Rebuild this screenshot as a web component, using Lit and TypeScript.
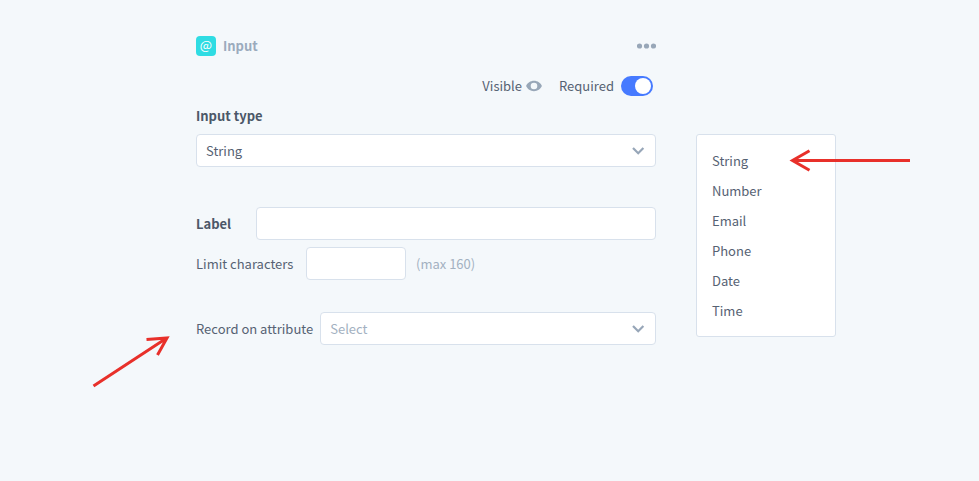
import { LitElement, html, css } from "lit";
import { customElement, property, state } from "lit/decorators.js";

const TYPES = ["String", "Number", "Email", "Phone", "Date", "Time"];

const reset = css`
  *,
  *::before {
    box-sizing: border-box;
  }
  button,
  input,
  select {
    font: inherit;
    color: inherit;
    margin: 0;
  }
  button {
    padding: 0;
    border: 0;
    background: none;
    cursor: pointer;
  }
  svg {
    display: block;
  }
`;

@customElement("type-menu")
class TypeMenu extends LitElement {
  @property({ type: Array }) items: string[] = [];

  static styles = [
    reset,
    css`
      :host {
        display: block;
        position: relative;
      }
      .list {
        margin: 0;
        padding: 11px 15px 10px;
        list-style: none;
        background: #fff;
        border: 1px solid #d8e1ec;
        border-radius: 3px;
      }
      .item {
        display: block;
        width: 100%;
        height: 30px;
        line-height: 30px;
        text-align: left;
      }
      .arrow {
        position: absolute;
        left: 93px;
        top: 14px;
        pointer-events: none;
      }
    `,
  ];

  render() {
    return html`
      <ul class="list">
        ${this.items.map(
          (name) => html`<li>
            <button
              class="item"
              @click=${() => this.dispatchEvent(new CustomEvent("pick", { detail: name }))}
            >${name}</button>
          </li>`
        )}
      </ul>
      <svg class="arrow" width="122" height="24" viewBox="0 0 122 24" fill="none" stroke="#e8302a" stroke-width="3" aria-hidden="true">
        <path d="M121 12.500H4M20.500 2.700L3.500 12.500l17 9.800" />
      </svg>
    `;
  }
}

@customElement("app-root")
class AppRoot extends LitElement {
  @state() private type = "String";

  static styles = [
    reset,
    css`
      :host {
        display: block;
        min-height: 100vh;
        background: #f4f8fb;
        color: #566273;
        font: 13px/20px "Noto Sans CJK SC", "Noto Sans", sans-serif;
      }
      .page {
        box-sizing: border-box;
        display: flex;
        align-items: flex-start;
        gap: 40px;
        padding: 36px 143px 36px 196px;
      }
      .form {
        flex: 1;
        min-width: 0;
      }
      .menu {
        flex: none;
        width: 140px;
        margin-top: 98px;
      }
      .head,
      .title,
      .flags,
      .visible,
      .row {
        display: flex;
        align-items: center;
      }
      .head {
        justify-content: space-between;
      }
      .title {
        gap: 7px;
        margin: 0;
        font-size: 13px;
        font-weight: 700;
        color: #9babbd;
      }
      .badge {
        width: 20px;
        height: 20px;
        border-radius: 4px;
        background: #2fdce3;
        color: #fff;
        font-weight: 400;
        line-height: 18px;
        text-align: center;
      }
      .flags {
        justify-content: flex-end;
        margin: 20px 3px 0 0;
      }
      .visible {
        gap: 4px;
        margin-right: 17px;
      }
      .switch {
        appearance: none;
        width: 32px;
        height: 20px;
        margin-left: 7px;
        padding: 2px;
        border-radius: 10px;
        background: #b4c0ce;
        cursor: pointer;
      }
      .switch::before {
        content: "";
        display: block;
        width: 16px;
        height: 16px;
        border-radius: 50%;
        background: #fff;
      }
      .switch:checked {
        background: #467aff;
      }
      .switch:checked::before {
        margin-left: 12px;
      }
      .strong {
        font-weight: 700;
        color: #4b5768;
      }
      .block {
        display: block;
        margin: 10px 0 8px;
      }
      .box {
        display: block;
        width: 100%;
        height: 33px;
        padding: 0 9px;
        border: 1px solid #d8e1ec;
        border-radius: 4px;
        background: #fff;
      }
      .picker {
        position: relative;
        flex: 1;
      }
      .picker .box {
        appearance: none;
      }
      .empty {
        color: #a3b1c1;
      }
      .chevron {
        position: absolute;
        right: 11px;
        top: 12px;
        pointer-events: none;
      }
      .row {
        position: relative;
      }
      .label-row {
        margin-top: 40px;
      }
      .label-row label {
        width: 60px;
      }
      .label-row .box {
        flex: 1;
      }
      .limit-row {
        gap: 10px;
        margin-top: 7px;
      }
      .limit-row label {
        width: 100px;
      }
      .limit-row .box {
        width: 100px;
      }
      .record-row {
        gap: 7px;
        margin-top: 32px;
      }
      .arrow {
        position: absolute;
        left: -104px;
        top: 22px;
        pointer-events: none;
      }
    `,
  ];

  private chevron() {
    return html`<svg class="chevron" width="13" height="10" viewBox="0 0 13 10" fill="none" stroke="#97a6b8" stroke-width="2.200" aria-hidden="true">
      <path d="M1 2l5.200 5.200L11.400 2" />
    </svg>`;
  }

  render() {
    return html`
      <main class="page">
        <form class="form" @submit=${(e: Event) => e.preventDefault()}>
          <header class="head">
            <h1 class="title"><span class="badge">@</span>Input</h1>
            <button type="button" aria-label="More options">
              <svg width="19" height="6" viewBox="0 0 19 6" fill="#98a7b8">
                <circle cx="2.500" cy="3" r="2.600" />
                <circle cx="9.500" cy="3" r="2.600" />
                <circle cx="16.500" cy="3" r="2.600" />
              </svg>
            </button>
          </header>
          <div class="flags">
            <button type="button" class="visible">
              Visible
              <svg width="16" height="12" viewBox="0 0 16 12" aria-hidden="true">
                <path fill="#98a7b8" fill-rule="evenodd" d="M8 .8C4.400.8 1.400 3 .1 6c1.300 3 4.300 5.200 7.900 5.200S14.600 9 15.900 6C14.600 3 11.600.8 8 .8zM8 9.300a3.300 3.300 0 1 1 0-6.600 3.300 3.300 0 0 1 0 6.600z" />
                <circle cx="8" cy="6" r="2.500" fill="#f4f8fb" />
              </svg>
            </button>
            <label for="required">Required</label>
            <input id="required" class="switch" type="checkbox" role="switch" checked />
          </div>

          <label class="strong block" for="type">Input type</label>
          <div class="picker">
            <select
              id="type"
              class="box"
              .value=${this.type}
              @change=${(e: Event) => (this.type = (e.target as HTMLSelectElement).value)}
            >
              ${TYPES.map((t) => html`<option ?selected=${t === this.type}>${t}</option>`)}
            </select>
            ${this.chevron()}
          </div>

          <div class="row label-row">
            <label class="strong" for="label">Label</label>
            <input id="label" class="box" type="text" />
          </div>
          <div class="row limit-row">
            <label for="limit">Limit characters</label>
            <input id="limit" class="box" type="text" inputmode="numeric" />
            <span class="empty">(max 160)</span>
          </div>
          <div class="row record-row">
            <label for="record">Record on attribute</label>
            <div class="picker">
              <select id="record" class="box empty">
                <option>Select</option>
              </select>
              ${this.chevron()}
            </div>
            <svg class="arrow" width="78" height="54" viewBox="0 0 78 54" fill="none" stroke="#e8302a" stroke-width="3" aria-hidden="true">
              <path d="M1.500 52L74 4.500M54.500 5.500L75 4 65.500 21" />
            </svg>
          </div>
        </form>
        <type-menu
          class="menu"
          .items=${TYPES}
          @pick=${(e: CustomEvent) => (this.type = e.detail)}
        ></type-menu>
      </main>
    `;
  }
}
